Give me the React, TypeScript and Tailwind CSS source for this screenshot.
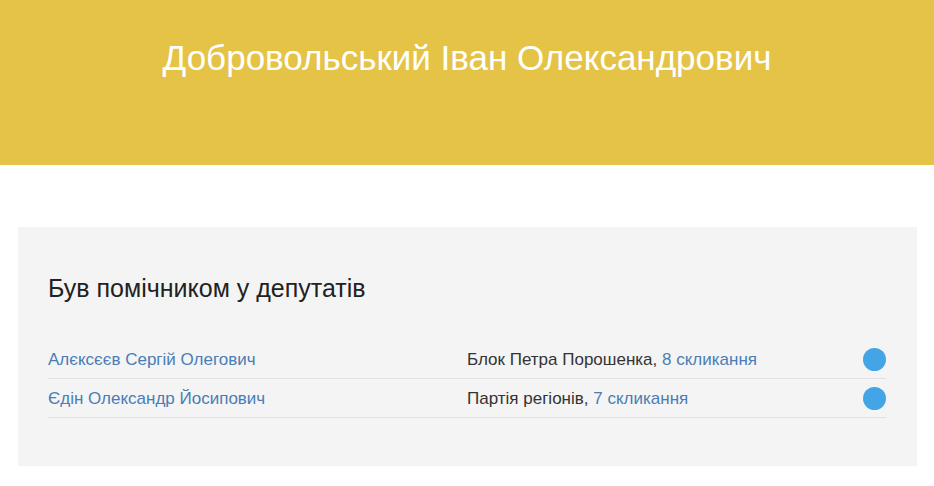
const deputies = [
  { name: 'Алєксєєв Сергій Олегович', party: 'Блок Петра Порошенка', convocation: '8 скликання' },
  { name: 'Єдін Олександр Йосипович', party: 'Партія регіонів', convocation: '7 скликання' },
];

export default function App() {
  return (
    <div className="min-h-[486px] bg-white font-['Liberation_Sans',Arial,sans-serif]">
      <header className="h-[165px] bg-[#e5c347] pt-[37px] text-center">
        <h1 className="text-[35px] leading-[42px] text-white">Добровольський Іван Олександрович</h1>
      </header>

      <div className="pt-[62px] pb-5">
        <section className="mx-[18px] w-[899px] bg-[#f4f4f4] px-[30px] pt-[46px] pb-[48px]">
          <h2 className="text-[25px] leading-[30px] text-[#222]">Був помічником у депутатів</h2>
          <ul className="mt-[37px] w-[838px]">
            {deputies.map((d) => (
              <li key={d.name} className="flex h-[39px] items-center border-b border-[#e2e2e2] text-[17px]">
                <a href="#" className="w-1/2 pt-px text-[#4a7db4]">
                  {d.name}
                </a>
                <div className="flex-1 pt-px text-[#333]">
                  {d.party}, <a href="#" className="text-[#4a7db4]">{d.convocation}</a>
                </div>
                <span className="h-[23px] w-[23px] rounded-full bg-[#43a5e6]" />
              </li>
            ))}
          </ul>
        </section>
      </div>
    </div>
  );
}
